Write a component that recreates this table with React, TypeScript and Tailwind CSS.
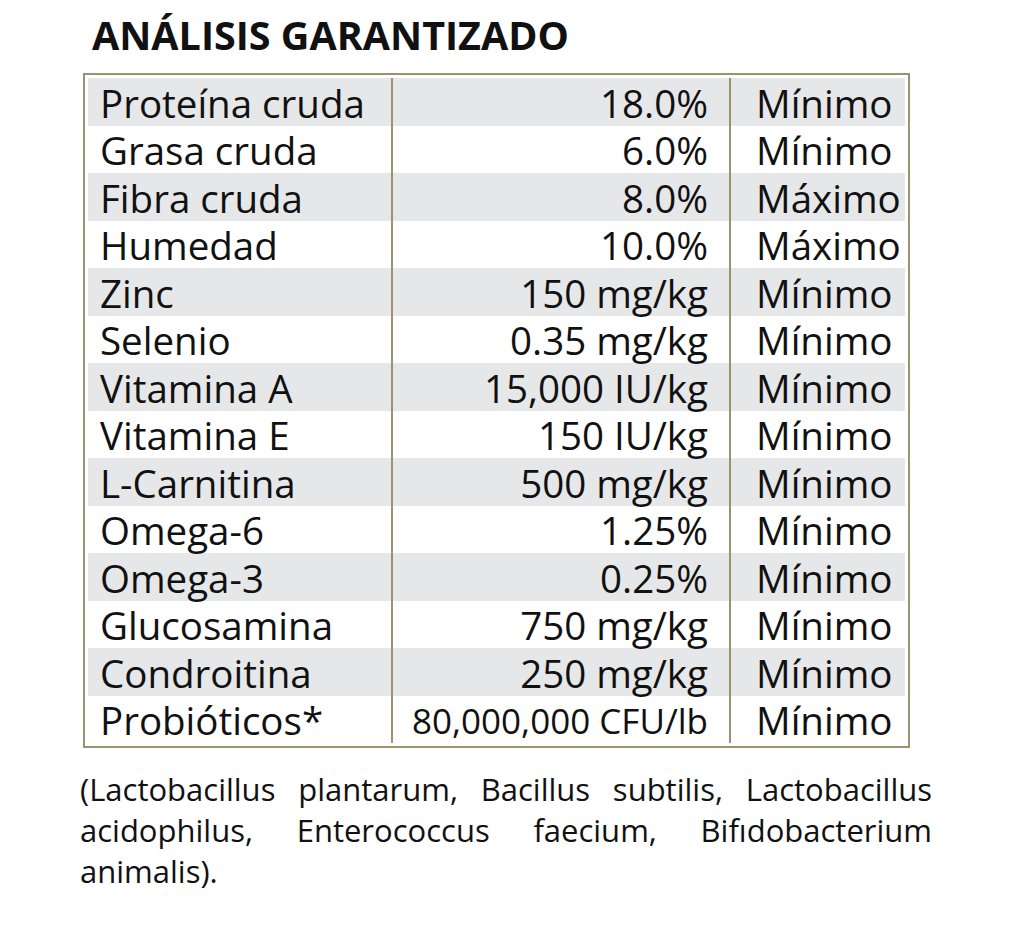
import React from 'react';

const rows: [string, string, string][] = [
  ['Proteína cruda', '18.0%', 'Mínimo'],
  ['Grasa cruda', '6.0%', 'Mínimo'],
  ['Fibra cruda', '8.0%', 'Máximo'],
  ['Humedad', '10.0%', 'Máximo'],
  ['Zinc', '150 mg/kg', 'Mínimo'],
  ['Selenio', '0.35 mg/kg', 'Mínimo'],
  ['Vitamina A', '15,000 IU/kg', 'Mínimo'],
  ['Vitamina E', '150 IU/kg', 'Mínimo'],
  ['L-Carnitina', '500 mg/kg', 'Mínimo'],
  ['Omega-6', '1.25%', 'Mínimo'],
  ['Omega-3', '0.25%', 'Mínimo'],
  ['Glucosamina', '750 mg/kg', 'Mínimo'],
  ['Condroitina', '250 mg/kg', 'Mínimo'],
  ['Probióticos*', '80,000,000 CFU/lb', 'Mínimo'],
];

export default function App() {
  return (
    <div className="h-[934px] w-[1024px] bg-white font-['Open_Sans',sans-serif] text-[#111] [font-variant-ligatures:none]">
      <div className="pl-[92px] pt-[12px]">
        <h1 className="text-[39.5px] font-bold leading-[46px]">ANÁLISIS GARANTIZADO</h1>
      </div>
      <div className="ml-[83px] mt-[15px] w-[827px] border-2 border-[#9d9270] p-[3px]">
        {rows.map(([name, value, kind], i) => (
          <div
            key={name}
            className={`flex h-[47.5px] items-center text-[38.5px] leading-none ${
              i % 2 === 0 ? 'bg-[#e6e7e8]' : 'bg-white'
            }`}
          >
            <div className="w-[303px] shrink-0 pl-[12px] pt-[2px]">{name}</div>
            <div
              className={`flex h-full w-[340px] shrink-0 items-center justify-end border-l-2 border-r-2 border-[#9d9270] pr-[21px] pt-[2px] ${
                i === rows.length - 1 ? 'text-[35px]' : ''
              }`}
            >
              {value}
            </div>
            <div className="pl-[25px] pt-[2px]">{kind}</div>
          </div>
        ))}
      </div>
      <div className="ml-[80px] mt-[21px] w-[852px] text-[31px] leading-[41px]">
        <p className="text-justify [text-align-last:justify]">
          (Lactobacillus plantarum, Bacillus subtilis, Lactobacillus
        </p>
        <p className="text-justify [text-align-last:justify]">
          acidophilus, Enterococcus faecium, Bifıdobacterium
        </p>
        <p>animalis).</p>
      </div>
    </div>
  );
}
